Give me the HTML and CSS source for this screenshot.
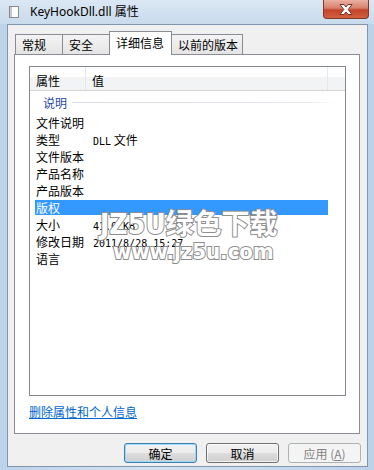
FILE: index.html
```html
<!DOCTYPE html>
<html lang="zh-CN">
<head>
  <meta charset="UTF-8">
  <title>KeyHookDll.dll 属性</title>
  <link rel="stylesheet" href="styles.css">
</head>
<body>
<div class="window">
  <div class="titlebar">
    <svg class="app-icon" width="10" height="12" viewBox="0 0 10 12">
      <rect x="0.5" y="0.5" width="9" height="11" fill="#fdfdfd" stroke="#8a8a8a"/>
      <rect x="1" y="1" width="2" height="10" fill="#c9c9c9"/>
    </svg>
    <span class="title">KeyHookDll.dll 属性</span>
    <div class="close-btn">
      <svg width="14" height="11" viewBox="0 0 14 11">
        <path d="M1 0.5 H5 L7 3 L9 0.5 H13 L9.2 5.5 L13 10.5 H9 L7 8 L5 10.5 H1 L4.8 5.5 Z" fill="#fff" stroke="#7a2f24" stroke-width="1"/>
      </svg>
    </div>
  </div>
  <div class="client">
    <div class="tabs">
      <div class="tab">常规</div>
      <div class="tab">安全</div>
      <div class="tab active">详细信息</div>
      <div class="tab">以前的版本</div>
    </div>
    <div class="panel">
      <div class="listview">
        <div class="lv-header">
          <div class="col-name">属性</div>
          <div class="col-value">值</div>
        </div>
        <div class="group"><span>说明</span><i class="group-line"></i></div>
        <div class="row"><span class="name">文件说明</span><span class="value"></span></div>
        <div class="row"><span class="name">类型</span><span class="value"><span class="num">DLL</span> 文件</span></div>
        <div class="row"><span class="name">文件版本</span><span class="value"></span></div>
        <div class="row"><span class="name">产品名称</span><span class="value"></span></div>
        <div class="row"><span class="name">产品版本</span><span class="value"></span></div>
        <div class="row selected"><span class="name">版权</span><span class="value"></span></div>
        <div class="row"><span class="name">大小</span><span class="value"><span class="num">41.0 KB</span></span></div>
        <div class="row"><span class="name">修改日期</span><span class="value"><span class="num">2011/8/28 15:27</span></span></div>
        <div class="row"><span class="name">语言</span><span class="value"></span></div>
        <div class="watermark">
          <div class="wm-line1">JZ5U绿色下载</div>
          <div class="wm-line2">www.jz5u.com</div>
        </div>
      </div>
      <a class="remove-link" href="#">删除属性和个人信息</a>
    </div>
    <div class="buttons">
      <button class="btn default">确定</button>
      <button class="btn">取消</button>
      <button class="btn" disabled>应用 (<u>A</u>)</button>
    </div>
  </div>
</div>
</body>
</html>
```
FILE: styles.css
```css
body {
  margin: 0;
  width: 374px;
  height: 470px;
  overflow: hidden;
  font-family: "Noto Sans", "Noto Sans CJK SC", sans-serif;
  font-size: 12px;
  background: linear-gradient(to right, #bdd3ea 0, #d3e2f1 40%, #c6d9ec 75%, #bcd2e9 100%);
}
.window {
  height: 470px;
}
.titlebar {
  height: 24px;
  display: flex;
  align-items: center;
  padding-left: 9px;
  background: linear-gradient(#dbe7f3, #c9dbed);
}
.app-icon {
  margin-right: 11px;
}
.title {
  color: #000;
  font-size: 12px;
  line-height: 14px;
}
.close-btn {
  align-self: flex-start;
  margin-left: auto;
  margin-right: 5px;
  width: 46px;
  height: 19px;
  box-sizing: border-box;
  border: 1px solid #7c3a30;
  border-top: none;
  border-radius: 0 0 4px 4px;
  background: linear-gradient(#eab1a3 0, #d9806b 45%, #c2452c 55%, #d4603f 100%);
  display: flex;
  align-items: center;
  justify-content: center;
}
.client {
  margin: 0 6px 0 7px;
  height: 443px;
  box-sizing: border-box;
  border: 1px solid #8196ad;
  background: #f0f0f0;
  padding: 6px 7px 3px 6px;
}
.tabs {
  display: flex;
  align-items: flex-end;
  height: 23px;
  padding-left: 1px;
}
.tab {
  height: 20px;
  box-sizing: border-box;
  min-width: 48px;
  padding: 0 4px 0 6px;
  border: 1px solid #898c95;
  border-bottom: none;
  margin-left: -1px;
  background: linear-gradient(#f4f4f4, #e4e4e4);
  font-family: "Noto Sans CJK SC", sans-serif;
  font-size: 12px;
  line-height: 19px;
  color: #000;
}
.tab:first-child {
  margin-left: 0;
}
.tab.active {
  position: relative;
  z-index: 1;
  height: 24px;
  margin-bottom: -1px;
  padding-right: 7px;
  background: #fff;
  line-height: 22px;
}
.panel {
  height: 380px;
  box-sizing: border-box;
  border: 1px solid #898c95;
  background: #fff;
  padding: 11px 13px 0 14px;
}
.listview {
  position: relative;
  height: 330px;
  box-sizing: border-box;
  border: 1px solid #828790;
  font-family: "Noto Sans CJK SC", sans-serif;
  font-size: 12px;
}
.lv-header {
  display: flex;
  height: 24px;
  box-sizing: border-box;
  border-bottom: 1px solid #d5d5d5;
  background: linear-gradient(#ffffff 0, #ffffff 42%, #f2f3f5 43%, #f2f3f5 100%);
  line-height: 27px;
}
.col-name {
  width: 56px;
  padding-left: 6px;
  box-sizing: border-box;
  border-right: 1px solid #e3e8ee;
}
.col-value {
  width: 242px;
  padding-left: 6px;
  box-sizing: border-box;
  border-right: 1px solid #e3e8ee;
}
.group {
  display: flex;
  align-items: center;
  height: 23px;
  padding-left: 13px;
  color: #1f48a6;
}
.group-line {
  flex: none;
  width: 264px;
  height: 1px;
  margin-left: 5px;
  background: linear-gradient(to right, #d9dee6, #e6e9ee 90%, #ffffff);
}
.row {
  display: flex;
  height: 17px;
  margin-left: 5px;
  width: 293px;
  line-height: 17px;
  color: #000;
}
.row .name {
  width: 58px;
  padding-left: 1px;
  box-sizing: border-box;
}
.row.selected {
  height: 15px;
  margin-top: 1px;
  margin-bottom: 1px;
  background: #3399ff;
  color: #fff;
  line-height: 15px;
}
.num {
  font-family: "DejaVu Sans Mono", monospace;
  font-size: 10px;
}
.watermark {
  position: absolute;
  left: 70px;
  top: 143px;
  color: #fff;
  font-family: "DejaVu Sans Condensed", "Noto Sans CJK SC", sans-serif;
  font-weight: bold;
  -webkit-text-stroke: 2px #8e8e8e;
  paint-order: stroke fill;
}
.wm-line1 {
  font-size: 28px;
  line-height: 30px;
}
.wm-line2 {
  margin-left: 13px;
  font-size: 22px;
  line-height: 24px;
}
.remove-link {
  display: inline-block;
  margin-top: 9px;
  font-family: "Noto Sans CJK SC", sans-serif;
  font-size: 12px;
  line-height: 14px;
  color: #0066cc;
  text-decoration: underline;
}
.buttons {
  display: flex;
  justify-content: flex-end;
  gap: 9px;
  margin-top: 9px;
  margin-right: -1px;
}
.btn {
  width: 73px;
  height: 20px;
  padding: 0;
  border: 1px solid #707070;
  border-radius: 3px;
  background: linear-gradient(#f2f2f2 0, #ebebeb 50%, #dddddd 51%, #cfcfcf 100%);
  box-shadow: inset 0 0 0 1px rgba(255, 255, 255, 0.7);
  font-family: "Noto Sans CJK SC", sans-serif;
  font-size: 12px;
  line-height: 17px;
  color: #000;
}
.btn.default {
  border-color: #3c7fb1;
  box-shadow: inset 0 0 0 1px #9fd9f6;
}
.btn:disabled {
  border-color: #adb2b5;
  background: #f4f4f4;
  box-shadow: none;
  color: #838383;
}
```
